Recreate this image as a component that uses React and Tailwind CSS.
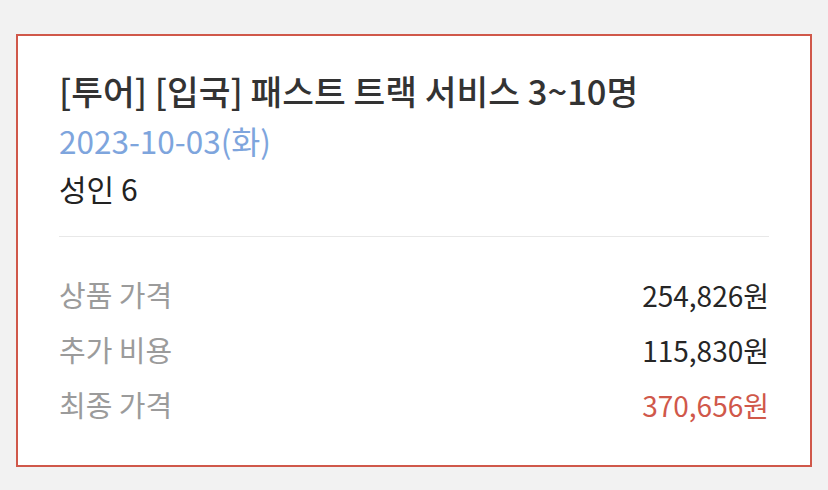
import React from "react";

const rows = [
  { label: "상품 가격", value: "254,826원" },
  { label: "추가 비용", value: "115,830원" },
  { label: "최종 가격", value: "370,656원", accent: true },
];

export default function App() {
  return (
    <div
      className="min-h-screen w-full bg-[#f2f2f2] pt-[34px] pl-4 pr-4"
      style={{ fontFamily: '"Noto Sans CJK KR", "Noto Sans", sans-serif' }}
    >
      <div className="w-[796px] h-[433px] border-2 border-[#d0584a] bg-white px-[41px] pt-[28px]">
        {/* Tour info */}
        <section className="pb-[24px] border-b border-[#e8e8e8]">
          <h1 className="text-[34.5px] leading-[52px] font-medium text-[#333333] whitespace-nowrap">
            [투어] [입국] 패스트 트랙 서비스 3~10명
          </h1>
          <p className="text-[31.5px] leading-[48px] text-[#7ea5dd]">2023-10-03(화)</p>
          <p className="text-[30px] leading-[48px] text-[#222222]">성인 6</p>
        </section>

        {/* Price summary */}
        <section className="pt-[30px]">
          {rows.map((r) => (
            <div key={r.label} className="flex justify-between items-center h-[55px]">
              <span className="text-[29px] text-[#9b9b9b]">{r.label}</span>
              <span
                className={
                  r.accent
                    ? "text-[28px] text-[#d0584a]"
                    : "text-[28px] text-[#262626]"
                }
              >
                {r.value}
              </span>
            </div>
          ))}
        </section>
      </div>
    </div>
  );
}
